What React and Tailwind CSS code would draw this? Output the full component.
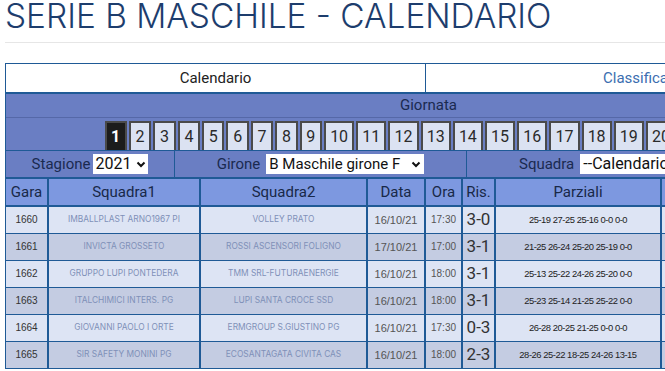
import React from "react";

const rounds = Array.from({ length: 22 }, (_, i) => i + 1);
const rows = [
  ["1660", "IMBALLPLAST ARNO1967 PI", "VOLLEY PRATO", "16/10/21", "17:30", "3-0", "25-19 27-25 25-16 0-0 0-0"],
  ["1661", "INVICTA GROSSETO", "ROSSI ASCENSORI FOLIGNO", "17/10/21", "17:00", "3-1", "21-25 26-24 25-20 25-19 0-0"],
  ["1662", "GRUPPO LUPI PONTEDERA", "TMM SRL-FUTURAENERGIE", "16/10/21", "18:00", "3-1", "25-13 25-22 24-26 25-20 0-0"],
  ["1663", "ITALCHIMICI INTERS. PG", "LUPI SANTA CROCE SSD", "16/10/21", "18:00", "3-1", "25-23 25-14 21-25 25-22 0-0"],
  ["1664", "GIOVANNI PAOLO I ORTE", "ERMGROUP S.GIUSTINO PG", "16/10/21", "17:30", "0-3", "26-28 20-25 21-25 0-0 0-0"],
  ["1665", "SIR SAFETY MONINI PG", "ECOSANTAGATA CIVITA CAS", "16/10/21", "18:00", "2-3", "28-26 25-22 18-25 24-26 13-15"],
];

const Chevron = () => (
  <svg width="10" height="7" viewBox="0 0 10 7" className="ml-[5px] shrink-0">
    <path d="M1.5 1.5 L5 5 L8.5 1.5" fill="none" stroke="#111" strokeWidth="2" />
  </svg>
);

const cols = "grid grid-cols-[41px_150px_165px_56px_35px_31px_164px_200px] gap-x-[2px]";

export default function App() {
  return (
    <div className="w-[665px] h-[371px] overflow-hidden bg-white relative font-['Roboto',sans-serif]">
      <div className="pl-[5px]">
        <h1 className="h-[42px] font-['Inter',sans-serif] font-light text-[33.4px] leading-[33px] text-[#1d3d6d] whitespace-nowrap">
          SERIE B MASCHILE - CALENDARIO
        </h1>
        <div className="h-px bg-[#e6e6e6] w-[700px]" />
        <div className="h-[20px]" />
        <div className="w-[846px] border-l border-t border-[#1f5a96]">
          <div className="flex h-[30px] bg-white border-b-2 border-[#1f5a96] text-[15px]">
            <div className="w-[420px] border-r border-[#1f5a96] flex items-center justify-center text-[#222]">Calendario</div>
            <div className="flex-1 flex items-center justify-center text-[#3b6eb0] pr-[6px]">Classifica</div>
          </div>
          <div className="bg-[#6a7ec3]">
            <div className="h-[24px] flex items-center justify-center text-[15px] text-[#1a2a50] border-b border-[#5568a8]">Giornata</div>
            <div className="h-[32px] flex items-end justify-center pr-[12px] gap-[2px]">
              {rounds.map((r) => (
                <div
                  key={r}
                  className={
                    (r < 10 ? "w-[22.4px] " : "w-[30.2px] ") +
                    (r === 1
                      ? "bg-[#1c1c1c] text-white font-bold "
                      : "bg-[#dbe2f2] text-[#2a2a2a] ") +
                    "h-[29px] flex items-center justify-center text-[16px] border-x-2 border-t-2 border-[#4a4a4a]"
                  }
                >
                  {r}
                </div>
              ))}
            </div>
            <div className="h-[27px] flex items-center border-t border-[#1f5a96] text-[15px] text-[#1a2a50]">
              <div className="w-[169px] h-full flex items-center justify-center border-r border-[#1f5a96]">
                <span>Stagione</span>
                <span className="ml-[3px] bg-white h-[20px] px-[2px] flex items-center text-[16px] text-[#111] whitespace-nowrap">
                  2021
                  <Chevron />
                </span>
              </div>
              <div className="w-[292px] h-full flex items-center justify-center border-r border-[#1f5a96]">
                <span>Girone</span>
                <span className="ml-[6px] bg-white h-[20px] px-[3px] flex items-center text-[15px] text-[#111] w-[158px] justify-between whitespace-nowrap">
                  B Maschile girone F
                  <Chevron />
                </span>
              </div>
              <div className="flex-1 h-full flex items-center pl-[52px]">
                <span>Squadra</span>
                <span className="ml-[6px] bg-white h-[20px] px-[3px] flex items-center text-[16px] text-[#111] w-[220px] whitespace-nowrap">
                  --Calendario
                </span>
              </div>
            </div>
          </div>
          <div className="bg-[#1f5a96] pt-[2px] pb-[2px] flex flex-col gap-y-[2px]">
            <div className={cols + " h-[26px]"}>
              {["Gara", "Squadra1", "Squadra2", "Data", "Ora", "Ris.", "Parziali", ""].map((h, i) => (
                <div key={i} className="bg-[#7d98e0] flex items-center justify-center text-[15px] text-[#182848]">
                  {h}
                </div>
              ))}
            </div>
            {rows.map((r, i) => {
              const bg = i % 2 === 0 ? "bg-[#dde4f4]" : "bg-[#c4cce2]";
              return (
                <div key={r[0]} className={cols + " h-[25px]"}>
                  <div className={bg + " flex items-center justify-center font-['Liberation_Sans',sans-serif] text-[10px] text-[#333]"}>{r[0]}</div>
                  <div className={bg + " flex items-center justify-center font-['Inter',sans-serif] text-[8.4px] text-[#7f90b8] whitespace-nowrap"}>{r[1]}</div>
                  <div className={bg + " flex items-center justify-center font-['Inter',sans-serif] text-[8.4px] text-[#7f90b8] whitespace-nowrap"}>{r[2]}</div>
                  <div className={bg + " flex items-center justify-center font-['Liberation_Sans',sans-serif] text-[11px] text-[#555]"}>{r[3]}</div>
                  <div className={bg + " flex items-center justify-center font-['Liberation_Sans',sans-serif] text-[10px] text-[#555]"}>{r[4]}</div>
                  <div className={bg + " flex items-center justify-center text-[17px] text-[#333]"}>{r[5]}</div>
                  <div className={bg + " flex items-center justify-center font-['Liberation_Sans',sans-serif] text-[9.4px] tracking-[-0.45px] text-[#222] whitespace-nowrap"}>{r[6]}</div>
                  <div className={bg}></div>
                </div>
              );
            })}
          </div>
        </div>
      </div>
    </div>
  );
}
